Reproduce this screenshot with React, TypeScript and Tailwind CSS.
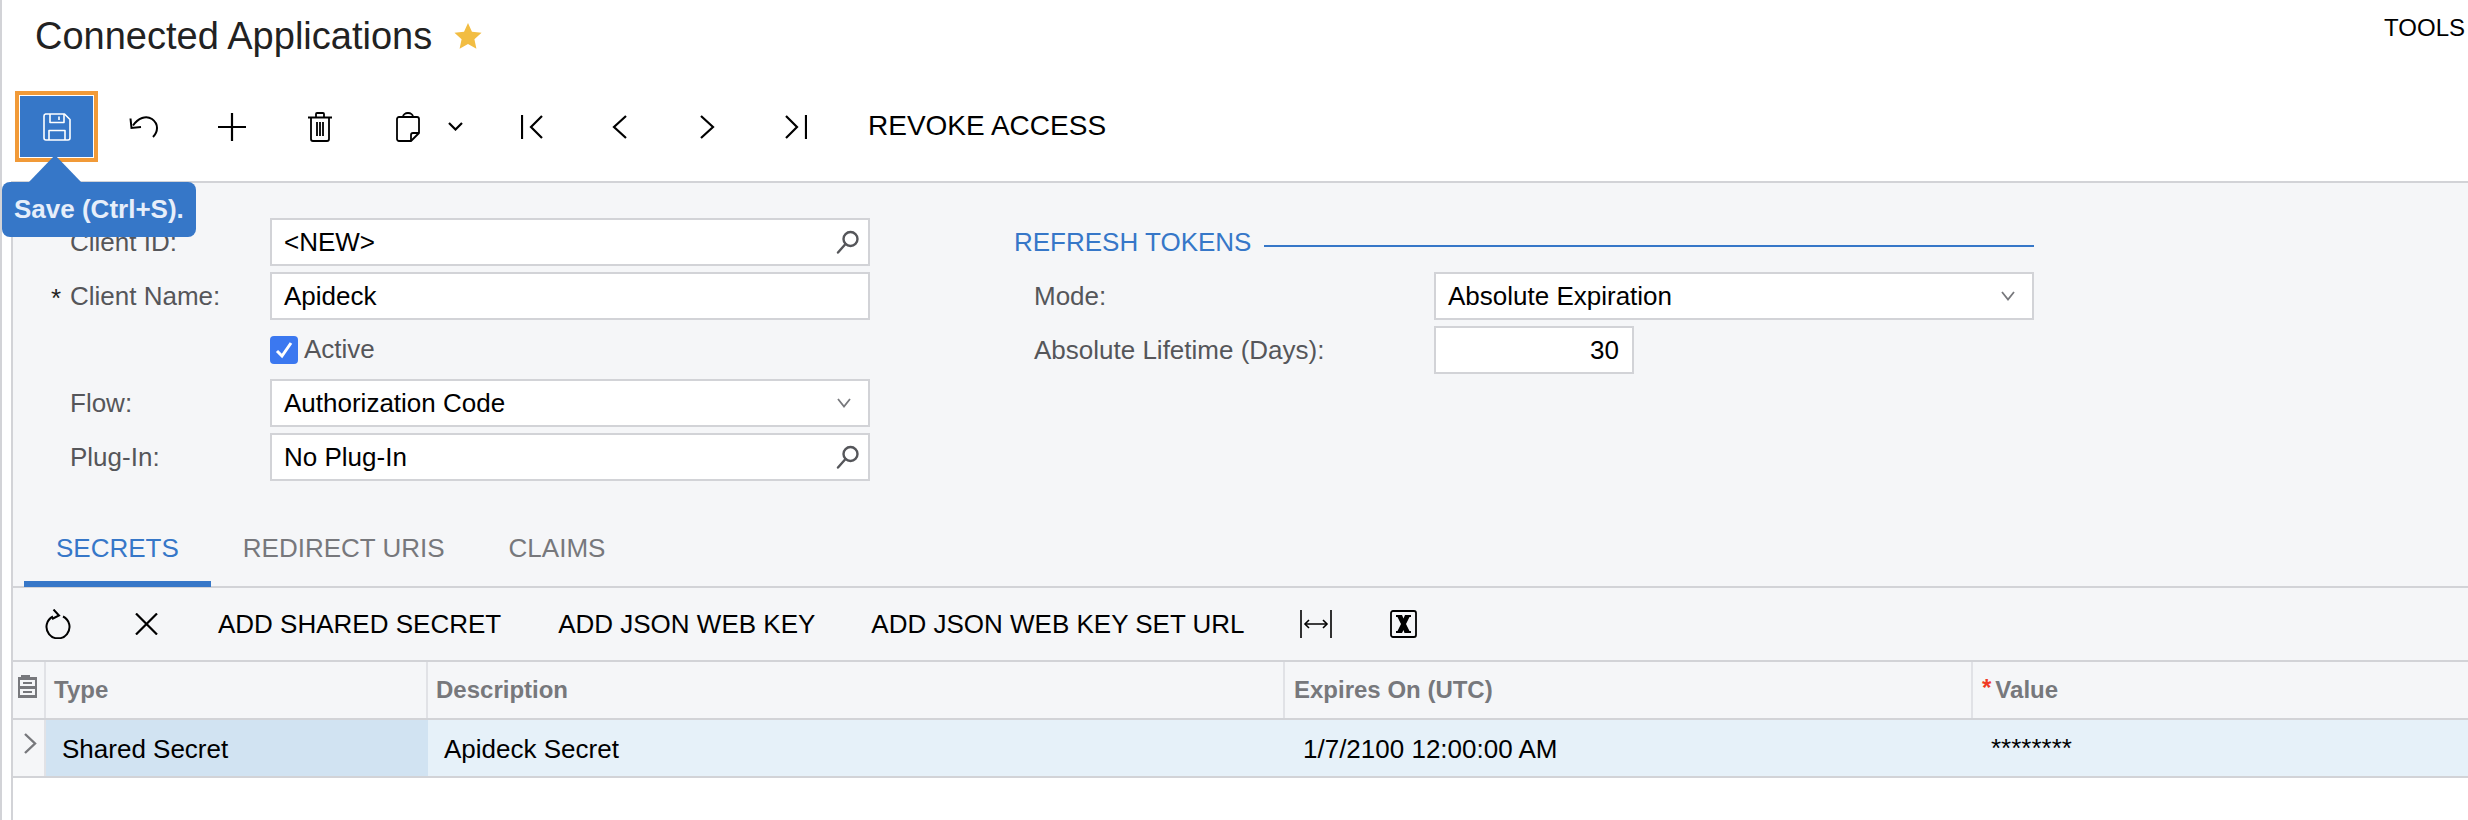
const IconBtn = ({ children }: { children: React.ReactNode }) => (
  <div className="w-[88px] h-full flex items-center justify-center text-black">{children}</div>
);

const TextBtn = ({ label }: { label: string }) => (
  <div className="h-full flex items-center pl-[28px] pr-[29px] text-[26px] text-black whitespace-nowrap">{label}</div>
);

const Label = ({ text, required }: { text: string; required?: boolean }) => (
  <div className="relative pl-[57px] w-[257px] text-[26px] text-[#55565a] whitespace-nowrap">
    {required && <span className="absolute left-[38px] top-[2px] text-[26px] text-[#222]">*</span>}
    {text}
  </div>
);

const SearchIcon = () => (
  <svg width="24" height="24" viewBox="0 0 24 24" fill="none" stroke="#55565a" strokeWidth="2.4">
    <circle cx="14.5" cy="9" r="7" />
    <path d="M9.5 14 L2 22.5" strokeLinecap="round" />
  </svg>
);

const ChevronIcon = () => (
  <svg width="14" height="10" viewBox="0 0 14 10" fill="none" stroke="#77787c" strokeWidth="1.8">
    <path d="M1 1 L7 8.5 L13 1" />
  </svg>
);

const Field = ({ value, icon, w = "w-[600px]", right }: { value: string; icon?: React.ReactNode; w?: string; right?: boolean }) => (
  <div className={`${w} h-[48px] bg-white border-2 border-[#d2d3d7] flex items-center pl-[12px] pr-[8px] text-[26px] text-black`}>
    <span className={right ? "flex-1 text-right pr-[5px]" : "flex-1"}>{value}</span>
    {icon}
  </div>
);

const FormRow = ({ label, required, children }: { label?: string; required?: boolean; children: React.ReactNode }) => (
  <div className="h-[48px] flex items-center">
    <Label text={label ?? ""} required={required} />
    {children}
  </div>
);

const Tab = ({ label, active }: { label: string; active?: boolean }) => (
  <div
    className={
      active
        ? "h-[64px] px-[32px] pt-[6px] border-b-[6px] border-[#3677c8] text-[26px] text-[#3677c8] -mb-[1px]"
        : "h-[64px] px-[32px] pt-[7px] text-[26px] text-[#77787c]"
    }
  >
    {label}
  </div>
);

export default function App() {
  return (
    <div className="relative h-[820px] w-[2468px] overflow-hidden bg-white border-l-2 border-[#d2d3d7] font-['Liberation_Sans',Arial,sans-serif]">
      {/* title */}
      <div className="h-[91px] flex justify-between">
        <div className="flex items-start pl-[33px] pt-[14px]">
          <h1 className="text-[38px] leading-[44px] text-[#222]">Connected Applications</h1>
          <svg className="ml-[22px] mt-[8px]" width="28" height="28" viewBox="0 0 24 24" fill="#f2bd42">
            <path d="M12 .8l3.4 7.6 8.2.9-6.1 5.5 1.7 8.1L12 18.8 4.8 22.9l1.7-8.1L.4 9.3l8.2-.9z" />
          </svg>
        </div>
        <div className="pr-[3px] pt-[14px] text-[24px] leading-[28px] text-black">TOOLS</div>
      </div>

      {/* main toolbar */}
      <div className="h-[71px] mb-[19px] pl-[13px] flex items-center">
        <div className="w-[83px] h-[71px] border-[4px] border-[#f19a38] p-[1px]">
          <div className="w-full h-full bg-[#3677c8] flex items-center justify-center">
            <svg width="28" height="28" viewBox="0 0 28 28" fill="none" stroke="#fff" strokeWidth="1.6" strokeLinejoin="round">
              <path d="M2.5 1h19L27 6.5V25a2 2 0 0 1-2 2H3a2 2 0 0 1-2-2V3a2 2 0 0 1 1.5-2z" />
              <path d="M7 1v8.5h14V1M16 3.5v3.5" />
              <path d="M6 27v-9.5h16V27" />
            </svg>
          </div>
        </div>
        <div className="w-[2px]" />
        <IconBtn>
          <svg width="30" height="22" viewBox="0 0 30 22" fill="none" stroke="currentColor" strokeWidth="2">
            <path d="M4 9.5 C9 2 17 -1 23 3 C30 8 29 16 24 21" />
            <path d="M1.5 2.5 L2.5 12 L12 11" />
          </svg>
        </IconBtn>
        <IconBtn>
          <svg width="28" height="28" viewBox="0 0 28 28" stroke="currentColor" strokeWidth="2.2">
            <path d="M0 14H28M14 0V28" />
          </svg>
        </IconBtn>
        <IconBtn>
          <svg width="24" height="30" viewBox="0 0 24 30" fill="none" stroke="currentColor" strokeWidth="1.8">
            <path d="M0 5.5H24M8 5V2a1 1 0 0 1 1-1h6a1 1 0 0 1 1 1v3" />
            <path d="M3 6v21a2 2 0 0 0 2 2h14a2 2 0 0 0 2-2V6" />
            <path d="M9 10v14M12 10v14M15 10v14" />
          </svg>
        </IconBtn>
        <div className="w-[123px] h-full flex items-center pl-[32px] gap-[28px]">
          <svg width="24" height="30" viewBox="0 0 24 30" fill="none" stroke="currentColor" strokeWidth="1.8" strokeLinejoin="round">
            <path d="M7 5a5 4 0 0 1 10 0" />
            <path d="M3 5h18a2 2 0 0 1 2 2v14l-8 8H3a2 2 0 0 1-2-2V7a2 2 0 0 1 2-2z" />
            <path d="M23 21h-6a2 2 0 0 0-2 2v6" />
          </svg>
          <svg width="15" height="9" viewBox="0 0 15 9" fill="none" stroke="currentColor" strokeWidth="2.2">
            <path d="M1 1l6.5 6.5L14 1" />
          </svg>
        </div>
        <IconBtn>
          <svg className="ml-[2px]" width="22" height="24" viewBox="0 0 22 24" fill="none" stroke="currentColor" strokeWidth="2.2">
            <path d="M1 0V24M21 1L10 12L21 23" />
          </svg>
        </IconBtn>
        <IconBtn>
          <svg width="16" height="24" viewBox="0 0 16 24" fill="none" stroke="currentColor" strokeWidth="2.2">
            <path d="M15 1L3 12L15 23" />
          </svg>
        </IconBtn>
        <IconBtn>
          <svg className="ml-[2px]" width="16" height="24" viewBox="0 0 16 24" fill="none" stroke="currentColor" strokeWidth="2.2">
            <path d="M1 1L13 12L1 23" />
          </svg>
        </IconBtn>
        <IconBtn>
          <svg className="ml-[2px]" width="22" height="24" viewBox="0 0 22 24" fill="none" stroke="currentColor" strokeWidth="2.2">
            <path d="M21 0V24M1 1L12 12L1 23" />
          </svg>
        </IconBtn>
        <div className="h-full flex items-center pl-[29px] pb-[2px] text-[28px] text-black whitespace-nowrap">REVOKE ACCESS</div>
      </div>

      {/* form + grid panel */}
      <div className="ml-[9px] border-l-2 border-[#d2d3d7] h-[639px] flex flex-col">
        <div className="bg-[#f5f6f8] border-t-2 border-[#d2d3d7] flex flex-col">
          <div className="h-[298px] pt-[35px] flex">
            <div className="w-[1001px] flex flex-col gap-[6px]">
              <FormRow label="Client ID:">
                <Field value="<NEW>" icon={<SearchIcon />} />
              </FormRow>
              <FormRow label="Client Name:" required>
                <Field value="Apideck" />
              </FormRow>
              <FormRow>
                <div className="flex items-center gap-[6px] text-[26px] text-[#55565a]">
                  <div className="w-[28px] h-[28px] rounded-[4px] bg-[#3b78f0] flex items-center justify-center">
                    <svg width="20" height="20" viewBox="0 0 20 20" fill="none" stroke="#fff" strokeWidth="3">
                      <path d="M3 11l5 5L17 3" />
                    </svg>
                  </div>
                  Active
                </div>
              </FormRow>
              <FormRow label="Flow:">
                <Field value="Authorization Code" icon={<span className="pr-[9px]"><ChevronIcon /></span>} />
              </FormRow>
              <FormRow label="Plug-In:">
                <Field value="No Plug-In" icon={<SearchIcon />} />
              </FormRow>
            </div>
            <div className="w-[1020px] flex flex-col gap-[6px]">
              <div className="h-[48px] flex items-center">
                <span className="text-[26px] text-[#3677c8] whitespace-nowrap">REFRESH TOKENS</span>
                <div className="flex-1 h-[2px] bg-[#3677c8] ml-[13px] mt-[7px]" />
              </div>
              <div className="h-[48px] flex items-center">
                <div className="pl-[20px] w-[420px] text-[26px] text-[#55565a]">Mode:</div>
                <Field value="Absolute Expiration" icon={<span className="pr-[9px]"><ChevronIcon /></span>} />
              </div>
              <div className="h-[48px] flex items-center">
                <div className="pl-[20px] w-[420px] text-[26px] text-[#55565a] whitespace-nowrap">Absolute Lifetime (Days):</div>
                <Field value="30" w="w-[200px]" right />
              </div>
            </div>
          </div>

          {/* tabs */}
          <div className="h-[107px] flex items-end pl-[11px] border-b-2 border-[#d2d3d7]">
            <Tab label="SECRETS" active />
            <Tab label="REDIRECT URIS" />
            <Tab label="CLAIMS" />
          </div>

          {/* grid toolbar */}
          <div className="h-[72px] flex items-center">
            <div className="w-[89px] pl-[1px] h-full">
              <IconBtn>
                <svg width="26" height="30" viewBox="0 0 26 30" fill="none" stroke="currentColor" strokeWidth="2">
                  <path d="M8 7.5 A11.5 11.5 0 1 0 18 7.5" />
                  <path d="M8.5 0.5 L14 6.5 L7 10" />
                </svg>
              </IconBtn>
            </div>
            <IconBtn>
              <svg width="23" height="22" viewBox="0 0 23 22" stroke="currentColor" strokeWidth="2.2">
                <path d="M1 0.5L22 21.5M22 0.5L1 21.5" />
              </svg>
            </IconBtn>
            <TextBtn label="ADD SHARED SECRET" />
            <TextBtn label="ADD JSON WEB KEY" />
            <div className="-ml-[1px]">
              <TextBtn label="ADD JSON WEB KEY SET URL" />
            </div>
            <div className="h-full -ml-[2px]">
              <IconBtn>
                <svg width="32" height="28" viewBox="0 0 32 28" fill="none" stroke="currentColor" strokeWidth="1.6">
                  <path d="M1 0V28M31 0V28M5 14H27" />
                  <path d="M9 10L5 14L9 18M23 10L27 14L23 18" />
                </svg>
              </IconBtn>
            </div>
            <IconBtn>
              <svg width="27" height="28" viewBox="0 0 27 28">
                <rect x="1" y="1" width="25" height="26" rx="2" fill="none" stroke="currentColor" strokeWidth="1.8" />
                <path d="M6 5h6l1.500 3.500L15 5h6v2h-1.500L16 14l3.500 7H21v2h-6.500l-1-3-1.500 3H6v-2h1.500L11 14 7.500 7H6z" fill="currentColor" />
              </svg>
            </IconBtn>
          </div>

          {/* grid header */}
          <div className="h-[60px] flex border-y-2 border-[#d2d3d7] text-[24px] font-bold text-[#77787c]">
            <div className="w-[33px] border-r-2 border-[#e1e2e6] flex justify-center pt-[13px] pr-[2px]">
              <svg width="19" height="23" viewBox="0 0 19 23" fill="#77787c">
                <path d="M3 0h9v2h7v21H0V2h3z" />
                <path d="M2 5h15v6H2zM2 14h15v6H2z" fill="#f5f6f8" />
                <path d="M5 7h9v2H5zM5 16h9v2H5z" />
              </svg>
            </div>
            <div className="w-[382px] border-r-2 border-[#e1e2e6] flex items-center pl-[8px]">Type</div>
            <div className="w-[857px] border-r-2 border-[#e1e2e6] flex items-center pl-[8px]">Description</div>
            <div className="w-[688px] border-r-2 border-[#e1e2e6] flex items-center pl-[9px]">Expires On (UTC)</div>
            <div className="flex-1 flex items-center pl-[9px]">
              <span className="text-[#f03a24] mr-[4px] -mt-[5px]">*</span>Value
            </div>
          </div>
        </div>

        {/* grid row */}
        <div className="h-[58px] flex border-b-2 border-[#d2d3d7] text-[26px] text-black">
          <div className="w-[33px] bg-[#f5f6f8] border-r-2 border-[#e1e2e6] pl-[10px] pt-[13px]">
            <svg width="14" height="21" viewBox="0 0 14 21" fill="none" stroke="#77787c" strokeWidth="2.4">
              <path d="M2 1l10 9.500L2 20" />
            </svg>
          </div>
          <div className="w-[382px] bg-[#d1e3f2] flex items-center pl-[16px] pt-[3px]">Shared Secret</div>
          <div className="w-[857px] bg-[#e6f1f9] flex items-center pl-[16px] pt-[3px]">Apideck Secret</div>
          <div className="w-[688px] bg-[#e6f1f9] flex items-center pl-[18px] pt-[3px]">1/7/2100 12:00:00 AM</div>
          <div className="flex-1 bg-[#e6f1f9] flex items-center pl-[18px]">********</div>
        </div>
      </div>

      {/* tooltip */}
      <div className="absolute left-0 top-[155px] flex flex-col">
        <svg className="ml-[26px]" width="54" height="28" viewBox="0 0 54 28" fill="#3677c8">
          <path d="M27 0L54 28H0z" />
        </svg>
        <div className="w-[194px] h-[55px] -mt-[1px] rounded-[8px] bg-[#3677c8] pl-[12px] flex items-center text-[26px] font-bold text-[#e6eefa] whitespace-nowrap">
          Save (Ctrl+S).
        </div>
      </div>
    </div>
  );
}
